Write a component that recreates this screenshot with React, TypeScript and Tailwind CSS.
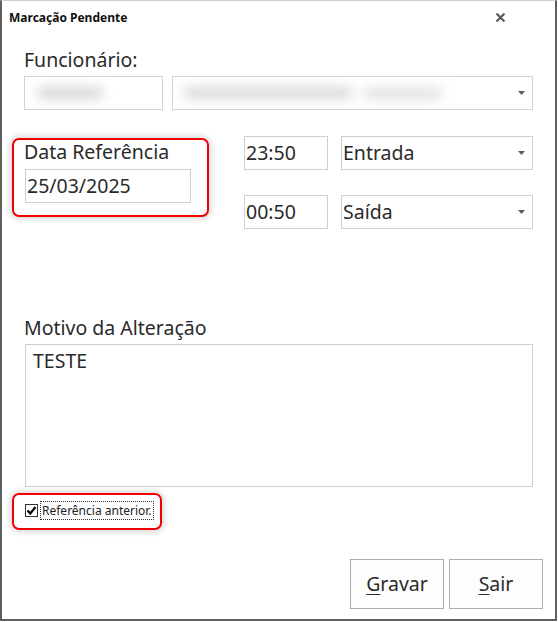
import React from "react";

function Arrow() {
  return (
    <svg width="7" height="4" viewBox="0 0 7 4" className="shrink-0">
      <path d="M0 0 L7 0 L3.5 4 Z" fill="#5a5a5a" />
    </svg>
  );
}

export default function App() {
  return (
    <div className="w-[558px] h-[622px] bg-white font-['Noto_Sans',sans-serif] text-[#2a2a2a]">
      <div className="w-[557px] h-[621px] border-t border-l-2 border-r-2 border-b-2 border-t-[#cfcfcf] border-l-[#5f5f5f] border-r-[#5f5f5f] border-b-[#5f5f5f] flex flex-col">
        {/* Title bar */}
        <div className="h-[33px] flex items-center justify-between pl-[7px] pr-[49px] shrink-0">
          <span className="text-[12px] font-bold leading-[16px] text-[#111]">Marcação Pendente</span>
          <svg width="11" height="11" viewBox="0 0 11 11">
            <path d="M1.5 1.5 L9.5 9.5 M9.5 1.5 L1.5 9.5" stroke="#5a5a5a" strokeWidth="2.2" />
          </svg>
        </div>

        {/* Funcionário */}
        <div className="ml-[22px] mt-[14px] text-[19.5px] leading-[23px]">Funcionário:</div>
        <div className="flex ml-[22px] mt-[5px] gap-[9px]">
          <div className="w-[139px] h-[34px] border border-[#d4d4d4] bg-white flex items-center overflow-hidden">
            <div className="ml-[12px] w-[66px] h-[12px] rounded-full bg-[#d6d6d6] blur-[6px]" />
          </div>
          <div className="w-[361px] h-[34px] border border-[#d4d4d4] bg-white flex items-center justify-between pr-[7px] overflow-hidden">
            <div className="flex items-center gap-[10px]">
              <div className="ml-[10px] w-[170px] h-[12px] rounded-full bg-[#d8d8d8] blur-[6px]" />
              <div className="w-[80px] h-[11px] rounded-full bg-[#e0e0e0] blur-[6px]" />
            </div>
            <Arrow />
          </div>
        </div>

        {/* Data referência + horários */}
        <div className="flex items-start mt-[26px]">
          <div className="ml-[10px] mt-[2px] w-[197px] h-[79px] border-2 border-[#f20000] rounded-[7px] shadow-[0_0_6px_2px_rgba(0,0,0,0.16)] pl-[10px] shrink-0">
            <div className="text-[19.5px] leading-[23px]">Data Referência</div>
            <div className="mt-[6px] ml-[1px] w-[166px] h-[34px] border border-[#cfcfcf] flex items-center pl-[1px] text-[19.5px]">
              25/03/2025
            </div>
          </div>
          <div className="ml-[35px] flex flex-col gap-[25px]">
            {[
              ["23:50", "Entrada"],
              ["00:50", "Saída"],
            ].map(([t, k]) => (
              <div key={t} className="flex gap-[13px]">
                <div className="w-[84px] h-[34px] border border-[#cfcfcf] flex items-center pl-[1px] text-[19.5px]">{t}</div>
                <div className="w-[192px] h-[34px] border border-[#cfcfcf] flex items-center justify-between pl-[1px] pr-[7px] text-[19.5px]">
                  <span>{k}</span>
                  <Arrow />
                </div>
              </div>
            ))}
          </div>
        </div>

        {/* Motivo */}
        <div className="ml-[22px] mt-[87px] text-[19.5px] leading-[23px]">Motivo da Alteração</div>
        <div className="ml-[23px] mt-[5px] w-[508px] h-[143px] border border-[#cfcfcf] pt-[4px] pl-[7px] text-[19.5px] leading-[23px]">
          TESTE
        </div>

        {/* Checkbox */}
        <div className="ml-[10px] mt-[6px] w-[150px] h-[37px] border-2 border-[#f20000] rounded-[7px] shadow-[0_0_6px_2px_rgba(0,0,0,0.16)] flex items-center pl-[11px]">
          <div className="w-[13px] h-[13px] border border-[#333] bg-white flex items-center justify-center shrink-0 -mt-[3px]">
            <svg width="11" height="11" viewBox="0 0 11 11">
              <path d="M1.5 5.5 L4.3 8.5 L9.5 2" stroke="#000" strokeWidth="2.2" fill="none" />
            </svg>
          </div>
          <div className="ml-[2px] -mt-[3px] border border-dotted border-[#333] px-[1px] text-[12px] leading-[17px] text-[#222]">
            Referência anterior.
          </div>
        </div>

        {/* Buttons */}
        <div className="flex justify-end gap-[5px] mr-[12px] mt-[29px]">
          <button className="w-[94px] h-[50px] border border-[#adadad] bg-[#fdfdfd] text-[19.5px] text-[#2a2a2a]">
            <span className="underline underline-offset-[3px] decoration-1">G</span>ravar
          </button>
          <button className="w-[94px] h-[50px] border border-[#adadad] bg-[#fdfdfd] text-[19.5px] text-[#2a2a2a]">
            <span className="underline underline-offset-[3px] decoration-1">S</span>air
          </button>
        </div>
      </div>
    </div>
  );
}
